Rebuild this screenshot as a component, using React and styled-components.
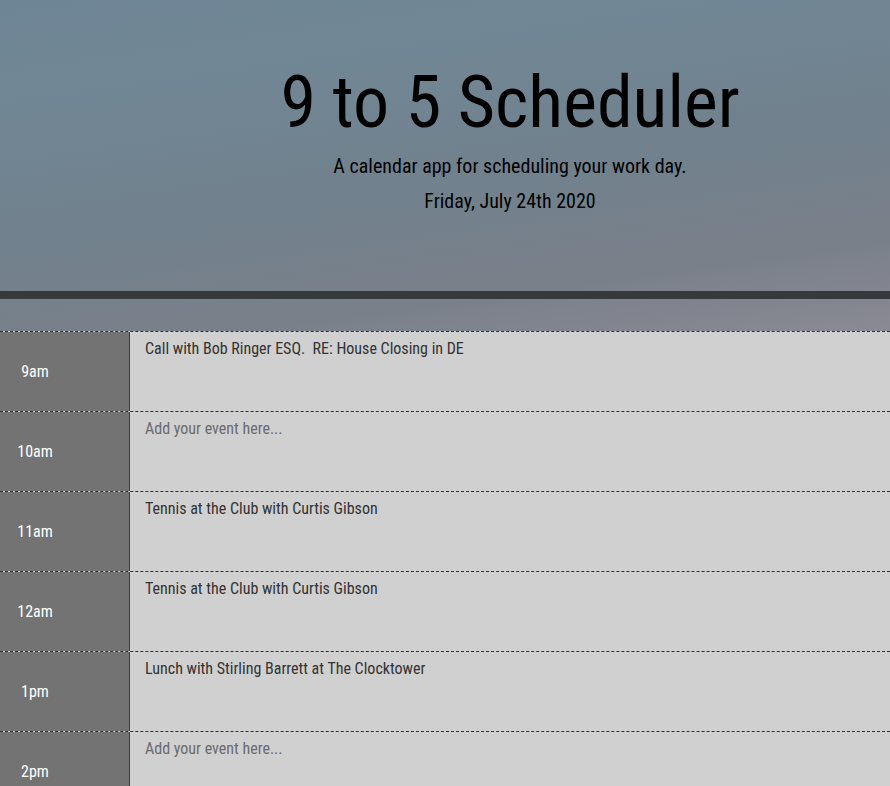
import React from 'react';
import styled, { createGlobalStyle } from 'styled-components';

const GlobalStyle = createGlobalStyle`
  html, body {
    margin: 0;
    padding: 0;
  }
  body {
    font-family: "Roboto Condensed", "Liberation Sans Narrow", "DejaVu Sans Condensed", Roboto, sans-serif;
    background: #d0d0d0;
  }
`;

const hours = [
  { label: '9am', text: 'Call with Bob Ringer ESQ.  RE: House Closing in DE' },
  { label: '10am', text: '' },
  { label: '11am', text: 'Tennis at the Club with Curtis Gibson' },
  { label: '12am', text: 'Tennis at the Club with Curtis Gibson' },
  { label: '1pm', text: 'Lunch with Stirling Barrett at The Clocktower' },
  { label: '2pm', text: '' },
  { label: '3pm', text: '' },
  { label: '4pm', text: '' },
  { label: '5pm', text: '' },
];

export default function App() {
  return (
    <Page>
      <GlobalStyle />
      <Jumbotron>
        <Title>9 to 5 Scheduler</Title>
        <Lead>A calendar app for scheduling your work day.</Lead>
        <Today>Friday, July 24th 2020</Today>
      </Jumbotron>
      <Divider />
      <Spacer />
      <Schedule>
        {hours.map((h) => (
          <Row key={h.label}>
            <Hour>
              <HourLabel>{h.label}</HourLabel>
            </Hour>
            <EventInput
              defaultValue={h.text}
              placeholder="Add your event here..."
            />
          </Row>
        ))}
      </Schedule>
    </Page>
  );
}

const Page = styled.div`
  min-height: 100vh;
  background: linear-gradient(172deg, #6e8596 0%, #718795 20%, #71818d 55%, #7a808a 80%, #8a8a93 100%);
  background-size: 100% 332px;
  background-repeat: no-repeat;
`;

const Jumbotron = styled.header`
  height: 291px;
  box-sizing: border-box;
  padding: 60px 0 0 130px;
  text-align: center;
  color: #000;
`;

const Title = styled.h1`
  margin: 0;
  font-size: 72px;
  font-weight: 400;
  line-height: 1.2;
`;

const Lead = styled.p`
  margin: 5px 0 0;
  font-size: 20px;
  font-weight: 400;
  line-height: 1.5;
`;

const Today = styled(Lead)`
  margin-top: 5px;
`;

const Divider = styled.div`
  height: 8px;
  background: #363a3d;
`;

const Spacer = styled.div`
  height: 32px;
`;

const Schedule = styled.main`
  background: #d0d0d0;
`;

const Row = styled.div`
  display: grid;
  grid-template-columns: 130px 1fr;
  box-sizing: border-box;
  height: 80px;
  border-top: 1px dashed #2f3235;
`;

const Hour = styled.div`
  display: flex;
  align-items: center;
  background: #737373;
  border-right: 1px solid #3a3d40;
  color: #fff;
  font-size: 16px;
  font-weight: 400;
`;

const HourLabel = styled.span`
  width: 70px;
  text-align: center;
`;

const EventInput = styled.textarea`
  display: block;
  box-sizing: border-box;
  width: 100%;
  height: 100%;
  margin: 0;
  padding: 6px 15px;
  border: none;
  outline: none;
  resize: none;
  background: #d0d0d0;
  color: #333;
  font-family: inherit;
  font-size: 16px;
  line-height: 1.4;

  &::placeholder {
    color: #6b6b6b;
  }
`;
